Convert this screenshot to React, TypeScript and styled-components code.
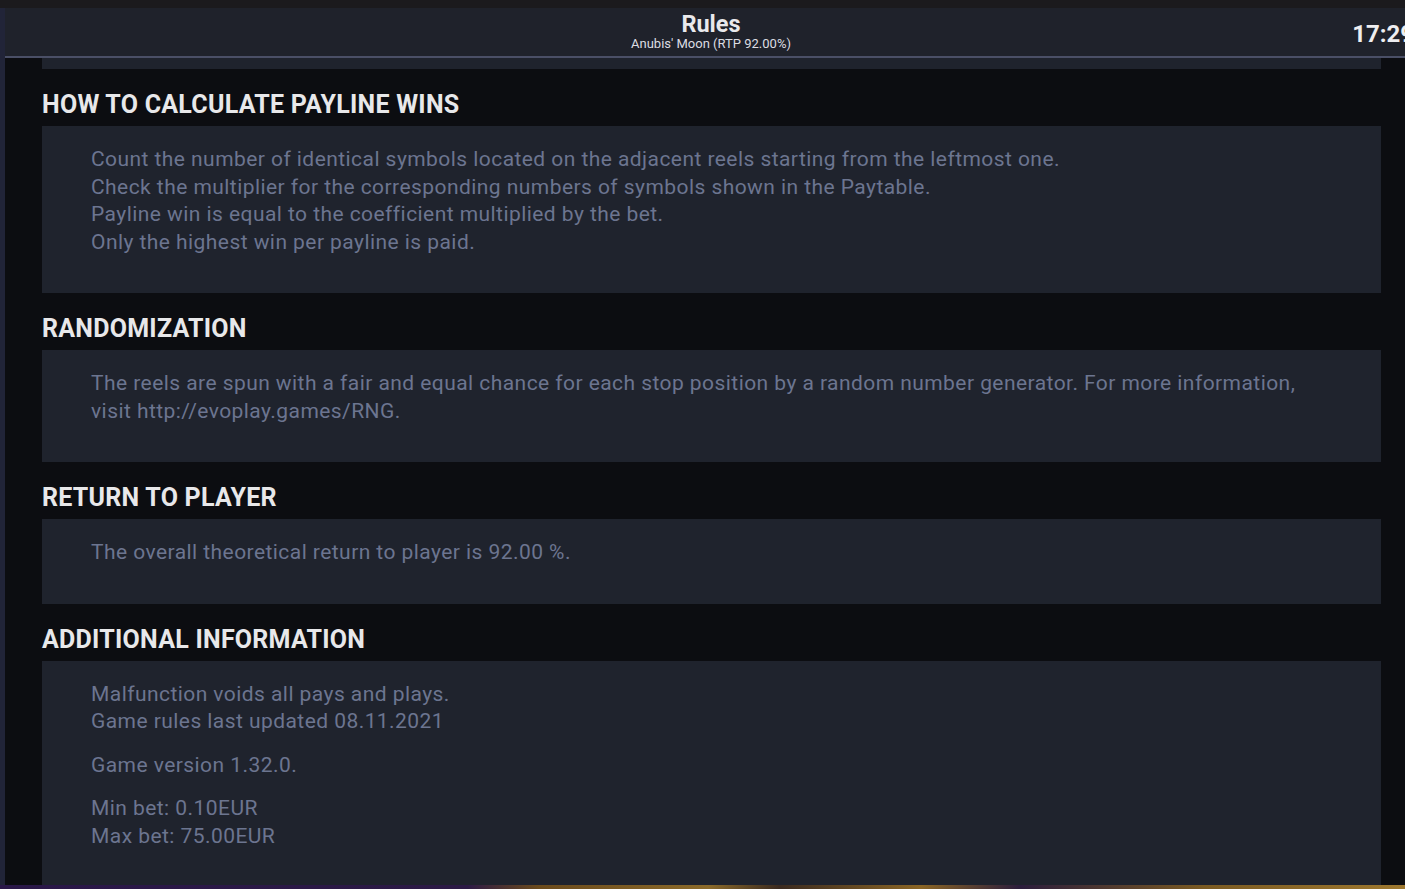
import React from "react";
import styled, { createGlobalStyle } from "styled-components";

const Global = createGlobalStyle`
  html, body { margin: 0; padding: 0; overflow: hidden; background: #0c0d11; }
  body { font-family: Roboto, "Liberation Sans", Arial, sans-serif; }
  * { box-sizing: border-box; }
`;

const Frame = styled.div`
  width: 1417px;
  height: 889px;
  display: grid;
  grid-template-rows: 8px 1fr 4px;
  overflow: hidden;
`;

const TopStrip = styled.div`
  background: #1b1a1d;
`;

const BottomStrip = styled.div`
  background: linear-gradient(90deg, #2a1748 0%, #2c1a45 33%, #6a4a1c 38%, #8b6a2a 50%, #3a2a20 55%, #8a6525 65%, #2b1d3c 72%, #7a5a22 85%, #a07a30 100%);
`;

const Middle = styled.div`
  display: flex;
  min-height: 0;
`;

const SideStrip = styled.div`
  width: 5px;
  flex: none;
  background: #212438;
`;

const Main = styled.div`
  flex: 1;
  display: flex;
  flex-direction: column;
  min-height: 0;
`;

const Header = styled.header`
  height: 50px;
  flex: none;
  background: #1f222b;
  border-bottom: 2px solid #4a4f66;
  display: grid;
  grid-template-columns: 1fr auto 1fr;
  align-items: center;
`;

const TitleBlock = styled.div`
  grid-column: 2;
  display: flex;
  flex-direction: column;
  align-items: center;
  padding-bottom: 2px;
`;

const Title = styled.div`
  color: #e9e9ec;
  font-weight: 700;
  font-size: 23.5px;
  line-height: 26px;
`;

const Subtitle = styled.div`
  color: #dcdde2;
  font-size: 13px;
  line-height: 16px;
  margin-top: -1px;
`;

const Clock = styled.div`
  grid-column: 3;
  justify-self: end;
  margin-right: 3px;
  color: #eeeef0;
  font-weight: 700;
  font-size: 24px;
  padding-top: 4px;
`;

const Content = styled.div`
  flex: 1;
  min-height: 0;
  overflow: hidden;
  padding-left: 37px;
  background: #0c0d11;
`;

const Column = styled.div`
  width: 1339px;
  display: flex;
  flex-direction: column;
`;

const CardTail = styled.div`
  height: 11px;
  background: #1f232d;
`;

const Heading = styled.h2`
  margin: 0;
  padding: 22px 0 8px;
  line-height: 27px;
  font-size: 25px;
  font-weight: 700;
  color: #e8e8ea;
  text-transform: uppercase;
  letter-spacing: 0.25px;
`;

const Card = styled.div`
  background: #1f232d;
  padding: 20px 49px 37px;
`;

const Para = styled.p`
  margin: 0;
  color: #6c7590;
  font-size: 21px;
  line-height: 27.5px;
  letter-spacing: 0.44px;
  & + & { margin-top: 16px; }
`;

const sections: { title: string; paras: string[][] }[] = [
  {
    title: "How to calculate payline wins",
    paras: [[
      "Count the number of identical symbols located on the adjacent reels starting from the leftmost one.",
      "Check the multiplier for the corresponding numbers of symbols shown in the Paytable.",
      "Payline win is equal to the coefficient multiplied by the bet.",
      "Only the highest win per payline is paid.",
    ]],
  },
  {
    title: "Randomization",
    paras: [[
      "The reels are spun with a fair and equal chance for each stop position by a random number generator. For more information,",
      "visit http://evoplay.games/RNG.",
    ]],
  },
  {
    title: "Return to player",
    paras: [["The overall theoretical return to player is 92.00 %."]],
  },
  {
    title: "Additional information",
    paras: [
      ["Malfunction voids all pays and plays.", "Game rules last updated 08.11.2021"],
      ["Game version 1.32.0."],
      ["Min bet: 0.10EUR", "Max bet: 75.00EUR"],
    ],
  },
];

export default function App() {
  return (
    <>
      <Global />
      <Frame>
        <TopStrip />
        <Middle>
          <SideStrip />
          <Main>
            <Header>
              <TitleBlock>
                <Title>Rules</Title>
                <Subtitle>Anubis' Moon (RTP 92.00%)</Subtitle>
              </TitleBlock>
              <Clock>17:29</Clock>
            </Header>
            <Content>
              <Column>
                <CardTail />
                {sections.map((s) => (
                  <React.Fragment key={s.title}>
                    <Heading>{s.title}</Heading>
                    <Card>
                      {s.paras.map((p, i) => (
                        <Para key={i}>
                          {p.map((line, j) => (
                            <React.Fragment key={j}>
                              {j > 0 && <br />}
                              {line}
                            </React.Fragment>
                          ))}
                        </Para>
                      ))}
                    </Card>
                  </React.Fragment>
                ))}
              </Column>
            </Content>
          </Main>
        </Middle>
        <BottomStrip />
      </Frame>
    </>
  );
}
